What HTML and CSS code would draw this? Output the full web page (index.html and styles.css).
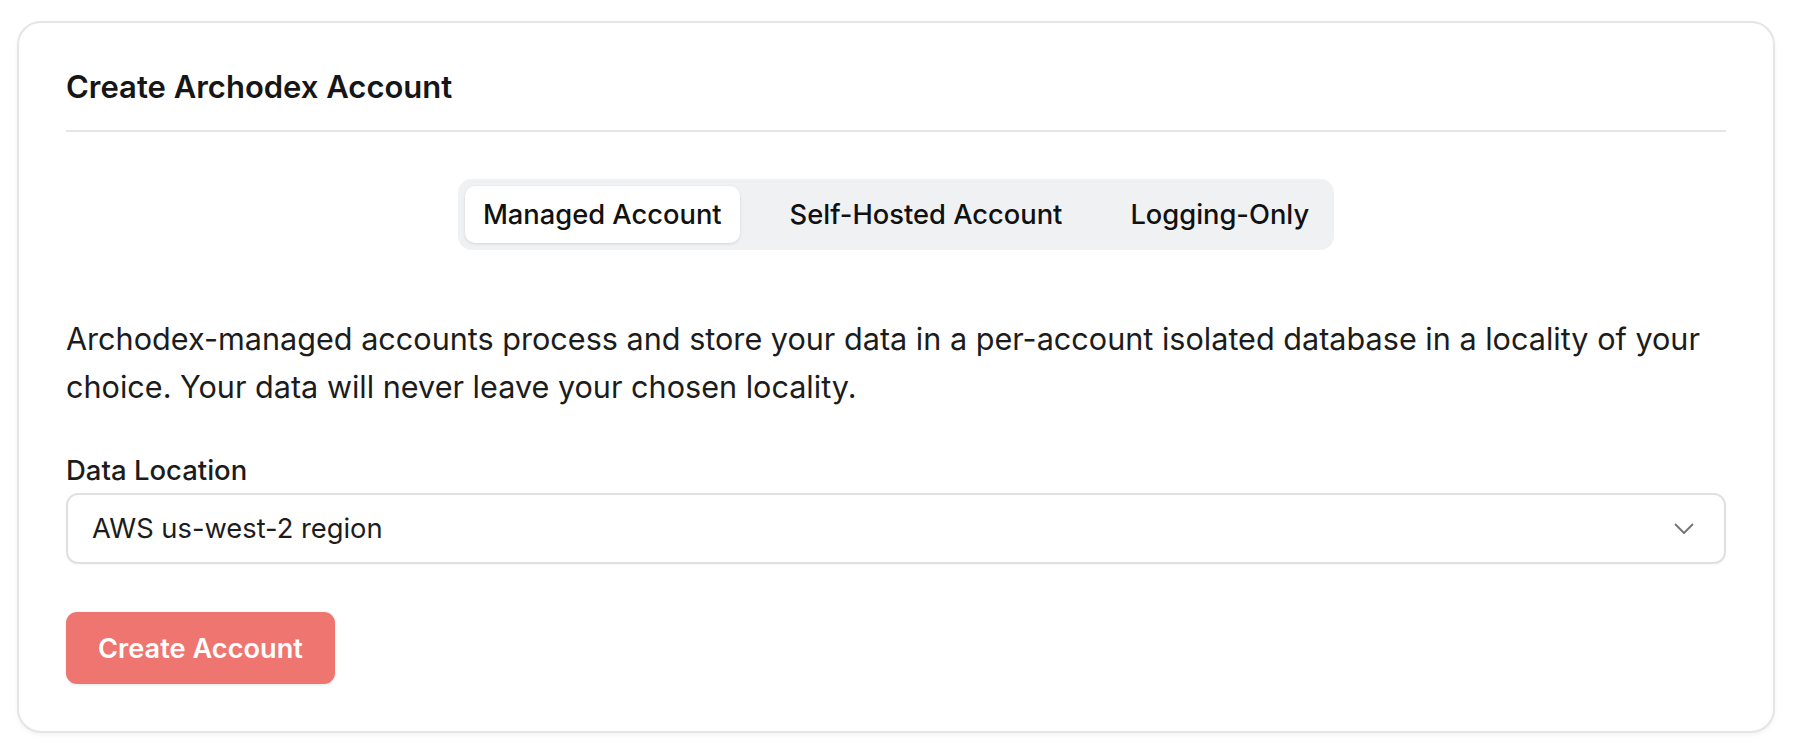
FILE: index.html
```html
<!DOCTYPE html>
<html lang="en">
<head>
<meta charset="utf-8">
<title>Create Archodex Account</title>
<link rel="stylesheet" href="styles.css">
</head>
<body>
<main class="page">
  <section class="card">
    <h1 class="card-title">Create Archodex Account</h1>
    <div class="tabs-wrap">
      <div class="tabs" role="tablist">
        <button class="tab tab-active" role="tab">Managed Account</button>
        <button class="tab" role="tab">Self-Hosted Account</button>
        <button class="tab" role="tab">Logging-Only</button>
      </div>
    </div>
    <p class="desc">Archodex-managed accounts process and store your data in a per-account isolated database in a locality of your choice. Your data will never leave your chosen locality.</p>
    <div class="field">
      <label class="label">Data Location</label>
      <div class="select">
        <span class="select-value">AWS us-west-2 region</span>
        <svg class="chevron" width="20" height="12" viewBox="0 0 20 12" fill="none"><polyline points="1.5,1.5 10,10 18.5,1.5" stroke="#737373" stroke-width="1.8" stroke-linecap="round" stroke-linejoin="round"/></svg>
      </div>
    </div>
    <div class="actions">
      <button class="btn-primary">Create Account</button>
    </div>
  </section>
</main>
</body>
</html>
```

FILE: styles.css
```css
* { box-sizing: border-box; }
html, body { margin: 0; padding: 0; background: #ffffff; }
body {
  font-family: Inter, "Noto Sans", "Liberation Sans", sans-serif;
  color: #1c1c1c;
}
.page {
  padding: 21px 21px 24px 17px;
}
.card {
  background: #ffffff;
  border: 2px solid #e3e5e9;
  border-radius: 24px;
  box-shadow: 0 2px 4px rgba(0, 0, 0, 0.05);
  padding: 43px 47px 46px 47px;
  height: 712px;
}
.card-title {
  margin: 0;
  font-size: 31px;
  line-height: 42px;
  font-weight: 600;
  color: #161616;
  padding-bottom: 22px;
  border-bottom: 2px solid #e3e5e9;
}
.tabs-wrap {
  display: flex;
  justify-content: center;
  margin-top: 47px;
}
.tabs {
  display: flex;
  gap: 32px;
  padding: 7px;
  background: #f0f1f3;
  border-radius: 14px;
}
.tab {
  font-family: inherit;
  font-size: 27.3px;
  font-weight: 500;
  line-height: 41px;
  padding: 8px 18px;
  border: none;
  background: transparent;
  color: #111111;
  border-radius: 10px;
}
.tab-active {
  background: #ffffff;
  box-shadow: 0 1px 3px rgba(0, 0, 0, 0.12);
}
.desc {
  margin: 65px 0 0 0;
  font-size: 30.6px;
  line-height: 47.5px;
  color: #1c1c1c;
}
.field {
  margin-top: 43px;
  display: flex;
  flex-direction: column;
}
.label {
  font-size: 27.5px;
  line-height: 35px;
  font-weight: 500;
  color: #1c1c1c;
}
.select {
  margin-top: 5px;
  height: 71px;
  border: 2px solid #e0e0e0;
  border-radius: 12px;
  display: flex;
  align-items: center;
  justify-content: space-between;
  padding: 0 30px 0 24px;
  box-shadow: 0 1px 2px rgba(0, 0, 0, 0.04);
}
.select-value {
  font-size: 27.3px;
  color: #1c1c1c;
}
.chevron { display: block; }
.actions {
  margin-top: 48px;
  display: flex;
}
.btn-primary {
  font-family: inherit;
  font-size: 27.2px;
  font-weight: 600;
  color: #ffffff;
  background: #ef7670;
  border: none;
  border-radius: 11px;
  height: 72px;
  padding: 0 32px;
  box-shadow: 0 1px 3px rgba(0, 0, 0, 0.1);
}
```
